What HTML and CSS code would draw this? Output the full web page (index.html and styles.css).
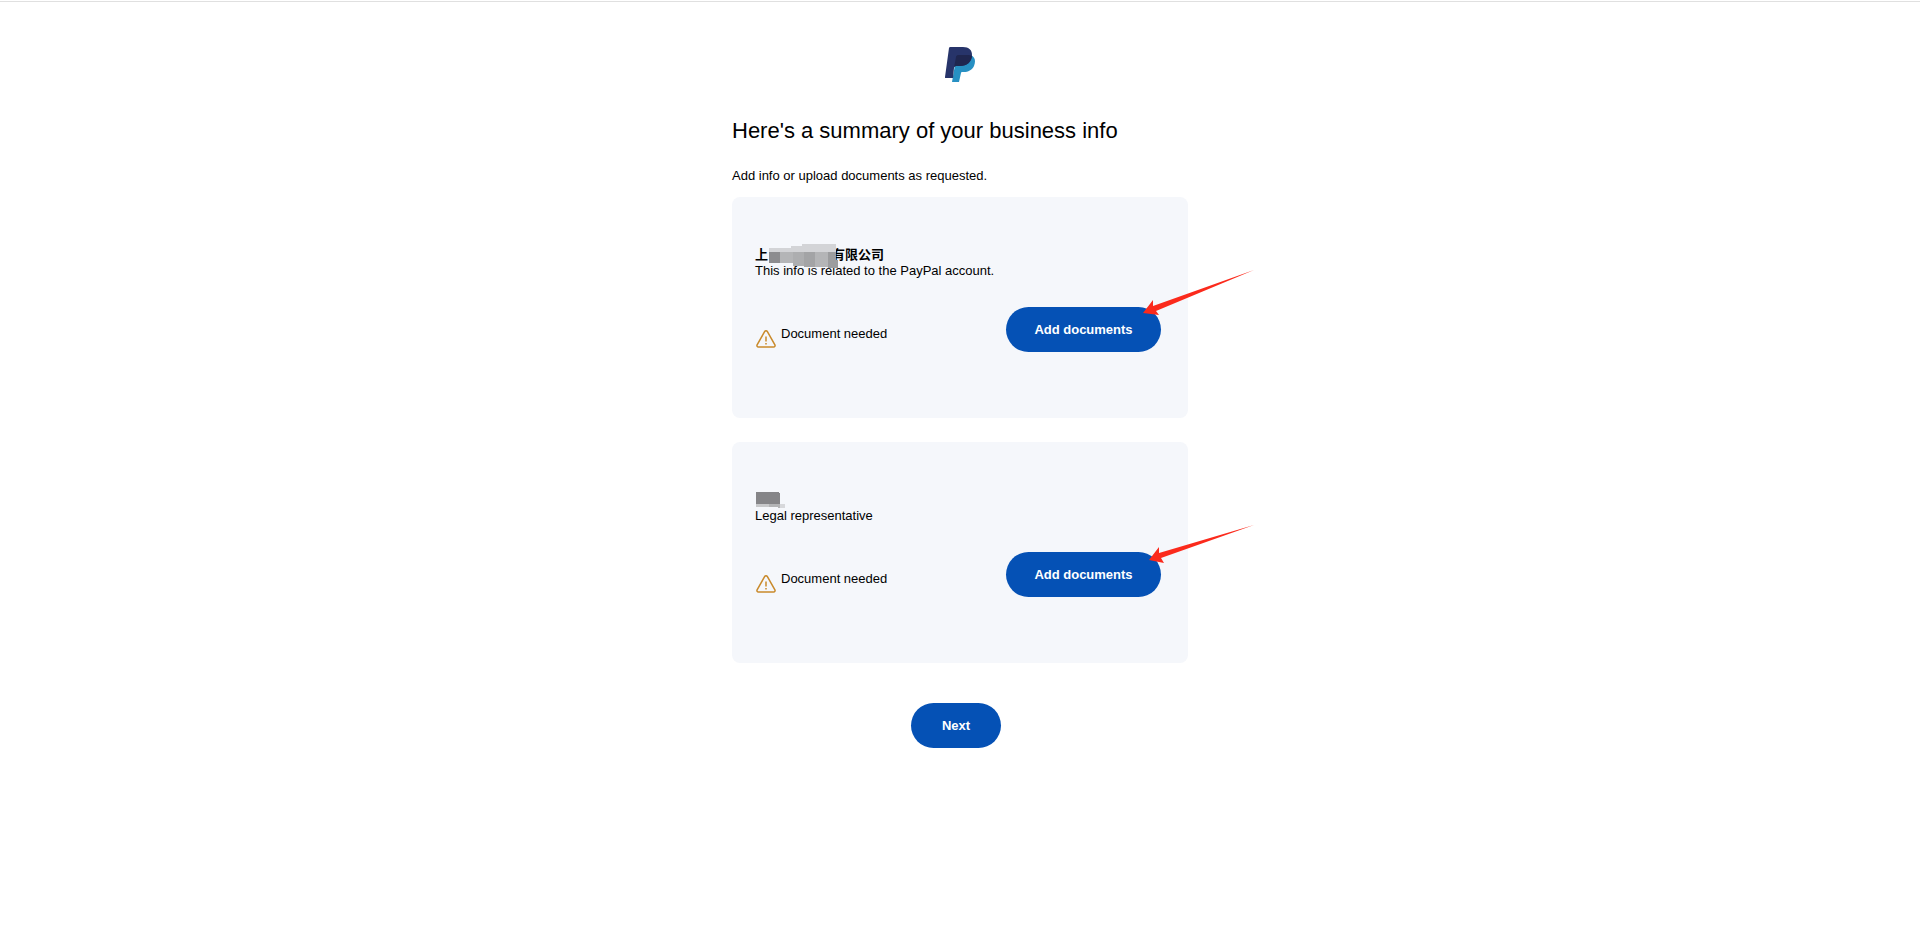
FILE: index.html
```
<!DOCTYPE html>
<html lang="en">
<head>
  <meta charset="utf-8">
  <title>Business info summary</title>
  <link rel="stylesheet" href="styles.css">
</head>
<body>
  <main class="page">
    <header class="header">
      <svg class="logo" viewBox="0 0 30 35" role="img" aria-label="PayPal">
        <path fill="#2790c3" d="M11 12 26 8c4 2 5 6 3 11-2 4-6 6-10 6h-2c-1 0-1 1-1 1l-2 9H7z"/>
        <path fill="#27346a" d="M4 1c0-1 1-1 2-1h12c6 0 9 3 9 8 0 7-5 11-12 11h-4c-1 0-2 1-2 2L8 31H1c-1 0-1 0-1-1z"/>
        <path fill="#1f264f" d="M27 9c-1 6-5 10-12 10h-4c-1 0-2 1-2 2l2-11c0-1 1-2 2-2h9c2 0 4 0 5 1z"/>
      </svg>
    </header>

    <h1>Here's a summary of your business info</h1>
    <p class="intro">Add info or upload documents as requested.</p>

    <section class="card">
      <h2 class="name">上<span class="hidden-name"></span>有限公司
        <svg class="mask mask-company" viewBox="0 0 70 24" aria-hidden="true">
          <path fill="#d3d4d7" d="M0 4h22V2h11V0h34v9H0z"/>
          <path fill="#b4b5b7" d="M11 8h13v11H11z"/>
          <path fill="#adaeb0" d="M24 8h11v14H24z"/>
          <path fill="#a3a4a6" d="M35 8h11v15H35z"/>
          <path fill="#b4b5b7" d="M46 8h13v15H46z"/>
          <path fill="#8c8c8f" d="M0 8h11v11H0z"/>
          <path fill="#9c9d9f" d="M59 8h8v8h2v8H59z"/>
        </svg>
      </h2>
      <p class="role">This info is related to the PayPal account.</p>
      <div class="row">
        <div class="status">
          <svg class="warning" viewBox="0 0 20 18" aria-hidden="true">
            <path d="M8.600 1.700a1.600 1.600 0 0 1 2.800 0l7.500 13.200a1.500 1.500 0 0 1-1.300 2.200H2.400a1.500 1.500 0 0 1-1.300-2.200z"/>
            <path d="M10 6.500v5M10 13v1.600"/>
          </svg>
          <span>Document needed</span>
        </div>
        <div class="action">
          <button type="button" class="btn btn-wide">Add documents</button>
          <svg class="arrow arrow-company" viewBox="0 0 112 48" aria-hidden="true">
            <path d="M0 43 10 30 10 36 111 0 13 41 16 45z"/>
          </svg>
        </div>
      </div>
    </section>

    <section class="card">
      <h2 class="name"><span class="hidden-name"></span>
        <svg class="mask mask-person" viewBox="0 0 30 16" aria-hidden="true">
          <path fill="#858588" d="M0 0h23v1h1v11H0z"/>
          <path fill="#c7c8ca" d="M0 12h13v3H0z"/>
          <path fill="#b3b4b6" d="M13 12h11v4h-2v-1h-9z"/>
          <path fill="#d7d8db" d="M24 12h5v4h-5z"/>
        </svg>
      </h2>
      <p class="role">Legal representative</p>
      <div class="row">
        <div class="status">
          <svg class="warning" viewBox="0 0 20 18" aria-hidden="true">
            <path d="M8.600 1.700a1.600 1.600 0 0 1 2.800 0l7.500 13.200a1.500 1.500 0 0 1-1.300 2.200H2.400a1.500 1.500 0 0 1-1.300-2.200z"/>
            <path d="M10 6.500v5M10 13v1.600"/>
          </svg>
          <span>Document needed</span>
        </div>
        <div class="action">
          <button type="button" class="btn btn-wide">Add documents</button>
          <svg class="arrow arrow-person" viewBox="0 0 106 40" aria-hidden="true">
            <path d="M0 35 10 22 10 28 105 0 12 33 15 38z"/>
          </svg>
        </div>
      </div>
    </section>

    <div class="footer">
      <button type="button" class="btn">Next</button>
    </div>
  </main>
</body>
</html>
```
FILE: styles.css
```
* {
  box-sizing: border-box;
}

body {
  margin: 0;
  padding-top: 1px;
  background: #fff;
  color: #000;
  font-family: "Liberation Sans", Arial, "Noto Sans CJK SC", sans-serif;
  font-size: 13px;
  line-height: 16px;
}

body::before {
  content: "";
  display: block;
  height: 1px;
  background: #e0e0e0;
}

.page {
  max-width: 456px;
  margin: 0 auto;
  padding: 45px 0;
}

.header {
  display: flex;
  justify-content: center;
}

.logo {
  width: 30px;
  height: 35px;
}

h1 {
  margin: 33px 0 21px;
  font-size: 22px;
  font-weight: 400;
  line-height: 32px;
}

p {
  margin: 0;
}

.intro {
  margin-bottom: 13px;
}

.card {
  margin-bottom: 24px;
  padding: 50px 27px 66px 23px;
  border-radius: 8px;
  background: #f5f7fb;
}

.name {
  position: relative;
  height: 16px;
  margin: 0;
  font-size: 13px;
  font-weight: 700;
  line-height: 16px;
}

.hidden-name {
  display: inline-block;
  width: 64px;
}

/* Blocks that cover the private names */
.mask {
  position: absolute;
}

.mask-company {
  top: -3px;
  left: 14px;
  width: 70px;
  height: 24px;
}

.mask-person {
  top: 0;
  left: 1px;
  width: 30px;
  height: 16px;
}

.row {
  display: flex;
  justify-content: space-between;
  margin-top: 28px;
}

.status {
  display: flex;
  gap: 5px;
  padding-top: 19px;
}

.warning {
  width: 20px;
  height: 18px;
  margin: 4px 0 0 1px;
  fill: none;
  stroke: #c98a2b;
  stroke-width: 1.5;
}

.action {
  position: relative;
}

.btn {
  min-width: 90px;
  height: 45px;
  padding: 0 28px;
  border: none;
  border-radius: 24px;
  background: #0551b5;
  color: #fff;
  font: inherit;
  font-weight: 700;
  cursor: pointer;
}

.btn:hover {
  background: #003f94;
}

.btn-wide {
  min-width: 155px;
}

.arrow {
  position: absolute;
  fill: #fb2a1c;
}

.arrow-company {
  top: -37px;
  left: 137px;
  width: 112px;
  height: 48px;
}

.arrow-person {
  top: -27px;
  left: 143px;
  width: 106px;
  height: 40px;
}

.footer {
  display: flex;
  justify-content: center;
  margin-top: 40px;
  padding-right: 8px;
}
```
